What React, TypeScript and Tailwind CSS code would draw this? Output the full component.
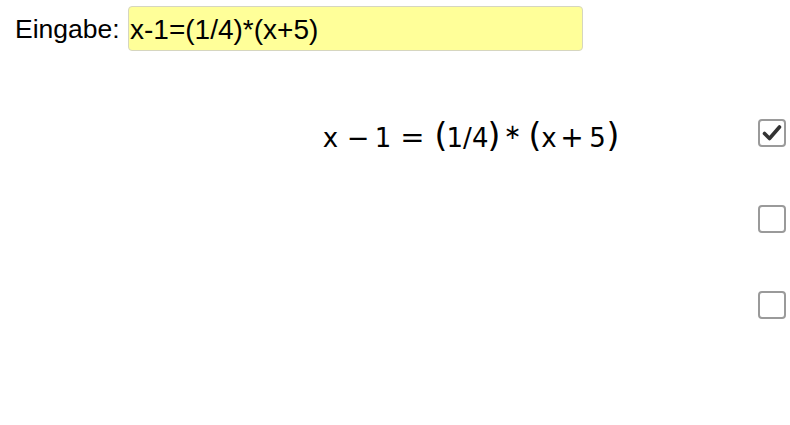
import React, { useState } from 'react';

const Check: React.FC<{ checked: boolean; onToggle: () => void }> = ({ checked, onToggle }) => (
  <button
    onClick={onToggle}
    className="w-[28px] h-[28px] border-2 border-[#9a9a9a] rounded-[4px] bg-white flex items-center justify-center"
  >
    {checked && (
      <svg width="20" height="18" viewBox="0 0 20 18">
        <path d="M2.5 9.5 L7.5 14.5 L17.5 3" fill="none" stroke="#333" strokeWidth="3.6" strokeLinecap="round" strokeLinejoin="round" />
      </svg>
    )}
  </button>
);

// formula laid out token by token, TeX-like: large parens, fixed slots
const Formula: React.FC = () => (
  <div className="flex items-baseline text-[26px] text-black leading-none whitespace-nowrap" style={{ fontFamily: '"DejaVu Sans", sans-serif' }}>
    <span className="w-[15px] flex justify-center">x</span>
    <span className="w-[20px] ml-[10px] flex justify-center text-[27px]">−</span>
    <span className="w-[12px] ml-[9px] flex justify-center">1</span>
    <span className="w-[25px] ml-[11px] flex justify-center text-[29px]">=</span>
    <span className="w-[8px] ml-[12px] flex justify-center text-[33px]">(</span>
    <span className="w-[45px] flex justify-center">1/4</span>
    <span className="w-[8px] flex justify-center text-[33px]">)</span>
    <span className="w-[9px] ml-[10px] flex justify-center text-[21px] -translate-y-[8px]">∗</span>
    <span className="w-[8px] ml-[14px] flex justify-center text-[33px]">(</span>
    <span className="w-[14px] ml-[3px] flex justify-center">x</span>
    <span className="w-[20px] ml-[6px] flex justify-center text-[28px]">+</span>
    <span className="w-[13px] ml-[9px] flex justify-center">5</span>
    <span className="w-[8px] ml-[5px] flex justify-center text-[33px]">)</span>
  </div>
);

const App: React.FC = () => {
  const [input, setInput] = useState('x-1=(1/4)*(x+5)');
  const [checks, setChecks] = useState([true, false, false]);

  const toggle = (i: number) => setChecks(c => c.map((v, j) => (j === i ? !v : v)));

  return (
    <div className="w-[790px] h-[425px] bg-white text-black" style={{ fontFamily: '"Liberation Sans", Arial, sans-serif' }}>
      <div className="flex items-center pt-[6px] pl-[15px]">
        <label className="text-[26.5px] w-[113px] leading-none pt-[2px]">Eingabe:</label>
        <input
          value={input}
          onChange={e => setInput(e.target.value)}
          className="w-[455px] h-[45px] bg-[#ffff99] border border-[#d6d6c0] rounded-[4px] px-[1px] pt-[2px] text-[28px] outline-none"
        />
      </div>

      <div className="mt-[39px] flex flex-col">
        {checks.map((c, i) => (
          <div key={i} className="h-[86px] flex items-center">
            <div className="flex-1 pl-[323px] pt-[4px]">
              {i === 0 && <Formula />}
            </div>
            <div className="pr-[4px]">
              <Check checked={c} onToggle={() => toggle(i)} />
            </div>
          </div>
        ))}
      </div>
    </div>
  );
};

export default App;
